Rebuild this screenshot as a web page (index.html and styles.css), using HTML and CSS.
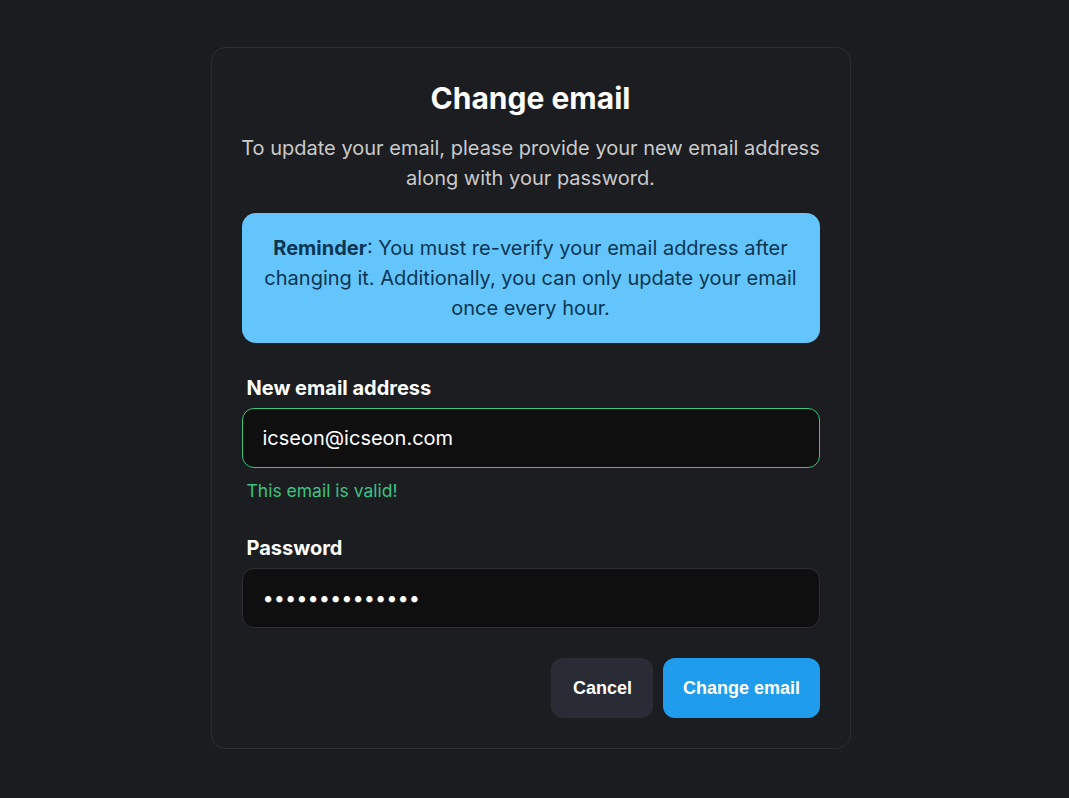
FILE: index.html
```html
<!DOCTYPE html>
<html lang="en">
<head>
<meta charset="utf-8">
<title>Change email</title>
<link rel="stylesheet" href="styles.css">
</head>
<body>
<main class="page">
  <form class="card">
    <h1 class="title">Change email</h1>
    <p class="desc">To update your email, please provide your new email address along with your password.</p>
    <div class="reminder"><strong>Reminder</strong>: You must re-verify your email address after changing it. Additionally, you can only update your email once every hour.</div>
    <div class="field field-email">
      <label class="label" for="email">New email address</label>
      <input class="input input-valid" id="email" type="email" value="icseon@icseon.com">
      <div class="hint">This email is valid!</div>
    </div>
    <div class="field field-pass">
      <label class="label" for="pass">Password</label>
      <input class="input" id="pass" type="password" value="abcdefghijklmn">
    </div>
    <div class="actions">
      <button type="button" class="btn btn-cancel">Cancel</button>
      <button type="button" class="btn btn-primary">Change email</button>
    </div>
  </form>
</main>
</body>
</html>
```

FILE: styles.css
```css
* { box-sizing: border-box; }
html, body { margin: 0; padding: 0; }
body {
  background: #1b1c1e;
  font-family: Inter, "Noto Sans", sans-serif;
  color: #ffffff;
  min-height: 798px;
}
.page {
  display: flex;
  justify-content: center;
  padding-top: 47px;
  padding-right: 8px;
}
.card {
  width: 640px;
  background: #1c1d20;
  border: 1px solid #2c2e33;
  border-radius: 14px;
  padding: 30px;
  display: flex;
  flex-direction: column;
}
.title {
  margin: 0;
  font-size: 30px;
  line-height: 40px;
  font-weight: 700;
  text-align: center;
  color: #ffffff;
}
.desc {
  margin: 15px -6px 0;
  font-size: 20px;
  line-height: 30px;
  text-align: center;
  color: #c9cacc;
}
.reminder {
  margin-top: 20px;
  background: #64c5fd;
  color: #0b3551;
  border-radius: 14px;
  padding: 20px 18px;
  font-size: 20px;
  line-height: 30px;
  text-align: center;
}
.reminder strong { font-weight: 700; }
.field { display: flex; flex-direction: column; }
.field-email { margin-top: 32px; }
.field-pass { margin-top: 31px; }
.label {
  font-size: 20px;
  line-height: 26px;
  font-weight: 700;
  padding-left: 5px;
  margin-bottom: 7px;
  color: #ffffff;
}
.input {
  height: 60px;
  width: 100%;
  background: #0f0f10;
  border: 1px solid #2d2f34;
  border-radius: 12px;
  padding: 0 20px;
  font-family: Inter, "Noto Sans", sans-serif;
  font-size: 20px;
  color: #ffffff;
  outline: none;
}
.input-valid { border-color: #3cc283; }
.hint {
  margin-top: 10px;
  padding-left: 5px;
  font-size: 17.5px;
  line-height: 26px;
  color: #3cc283;
}
.actions {
  margin-top: 30px;
  display: flex;
  justify-content: flex-end;
  gap: 10px;
}
.btn {
  height: 60px;
  border: none;
  border-radius: 12px;
  font-family: "Liberation Sans", Arial, sans-serif;
  font-size: 18px;
  font-weight: 700;
  color: #ffffff;
}
.btn-cancel { background: #292c35; padding: 0 21.5px; }
.btn-primary { background: #1f9cec; padding: 0 19.5px; }
```
